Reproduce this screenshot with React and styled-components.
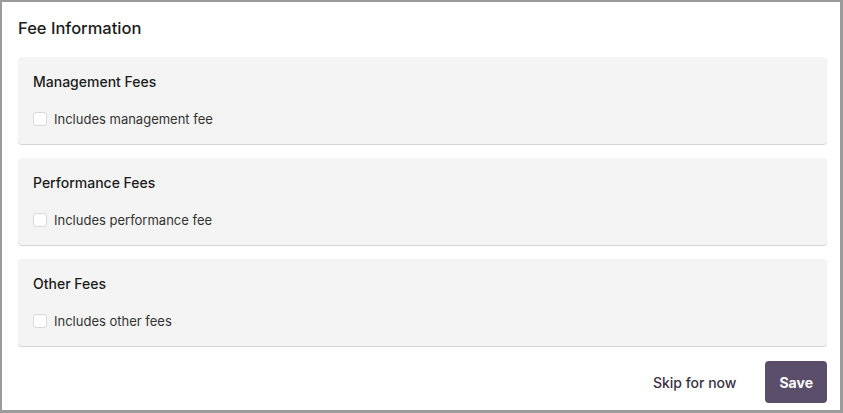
import React from 'react'
import styled, { createGlobalStyle } from 'styled-components'

const GlobalStyle = createGlobalStyle`
  html, body { margin: 0; padding: 0; background: #ffffff; }
  body { font-family: Inter, Roboto, "Noto Sans", Arial, sans-serif; }
  * { box-sizing: border-box; }
`

const Frame = styled.div`
  width: 843px;
  height: 413px;
  border: 2px solid #9b9b9b;
  border-right-width: 3px;
  border-bottom-width: 3px;
  background: #ffffff;
  padding: 14px 13px 0 16px;
  display: flex;
  flex-direction: column;
`

const Title = styled.h2`
  margin: 0 0 17px;
  font-size: 16.5px;
  line-height: 24px;
  font-weight: 500;
  color: #1c1c1c;
`

const Sections = styled.div`
  display: flex;
  flex-direction: column;
  gap: 14px;
`

const Card = styled.section`
  height: 87px;
  background: #f4f4f4;
  border-radius: 4px;
  box-shadow: 0 1px 1px rgba(0, 0, 0, 0.18);
  padding: 15px 15px 0;
  display: flex;
  flex-direction: column;
  gap: 19px;
`

const CardTitle = styled.h3`
  margin: 0;
  font-size: 14px;
  line-height: 20px;
  font-weight: 500;
  color: #1c1c1c;
`

const Option = styled.label`
  display: flex;
  align-items: center;
  gap: 7px;
  font-size: 13px;
  color: #333333;
  cursor: pointer;
`

const Box = styled.span`
  width: 14px;
  height: 14px;
  border: 1px solid #d9d9d9;
  border-radius: 3px;
  background: #ffffff;
`

const Footer = styled.div`
  margin-top: 15px;
  display: flex;
  justify-content: flex-end;
  align-items: center;
  gap: 17px;
`

const Button = styled.button`
  height: 42px;
  padding: 0 ${p => (p.$primary ? '14px' : '12px')};
  border: none;
  border-radius: 4px;
  font-family: inherit;
  font-size: 14px;
  font-weight: ${p => (p.$primary ? 700 : 500)};
  background: ${p => (p.$primary ? '#5b4e6a' : 'transparent')};
  color: ${p => (p.$primary ? '#ffffff' : '#3a3142')};
  cursor: pointer;
`

const fees = [
  { title: 'Management Fees', label: 'Includes management fee' },
  { title: 'Performance Fees', label: 'Includes performance fee' },
  { title: 'Other Fees', label: 'Includes other fees' },
]

const App = () => {
  return (
    <>
      <GlobalStyle />
      <Frame>
        <Title>Fee Information</Title>
        <Sections>
          {fees.map(f => (
            <Card key={f.title}>
              <CardTitle>{f.title}</CardTitle>
              <Option>
                <Box />
                {f.label}
              </Option>
            </Card>
          ))}
        </Sections>
        <Footer>
          <Button>Skip for now</Button>
          <Button $primary>Save</Button>
        </Footer>
      </Frame>
    </>
  )
}

export default App
